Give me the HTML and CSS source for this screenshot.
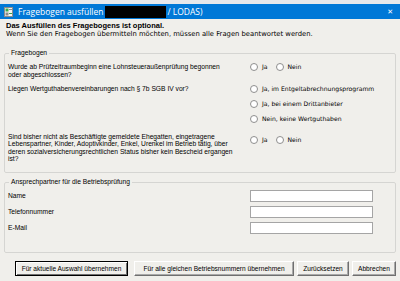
FILE: index.html
```html
<!DOCTYPE html>
<html lang="de">
<head>
    <meta charset="UTF-8">
    <title>Fragebogen ausfüllen</title>
    <link rel="stylesheet" href="styles.css">
</head>
<body>
    <div class="window">
        <div class="top-strip"></div>
        <div class="titlebar">
            <svg class="app-icon" width="9" height="10" viewBox="0 0 9 10">
                <rect x="0.5" y="0.5" width="8" height="9" fill="#f4f4f4" stroke="#8c8c8c"/>
                <rect x="1.5" y="1.5" width="3" height="3" fill="#3aa94a"/>
                <rect x="1.5" y="5.5" width="3" height="3" fill="#8c8c8c"/>
                <rect x="5" y="2" width="3" height="1" fill="#8c8c8c"/>
                <rect x="5" y="6" width="3" height="1" fill="#3aa94a"/>
            </svg>
            <span class="title-text">Fragebogen ausfüllen</span>
            <span class="redacted"></span>
            <span class="title-text">/ LODAS)</span>
            <span class="close">&#x2715;</span>
        </div>

        <div class="content">
            <div class="intro">
                <div class="intro-bold">Das Ausfüllen des Fragebogens ist optional.</div>
                <div>Wenn Sie den Fragebogen übermitteln möchten, müssen alle Fragen beantwortet werden.</div>
            </div>

            <fieldset class="group questions">
                <legend>Fragebogen</legend>
                <div class="row">
                    <div class="question">Wurde ab Prüfzeitraumbeginn eine Lohnsteueraußenprüfung begonnen<br>oder abgeschlossen?</div>
                    <div class="answers inline">
                        <label class="radio"><span class="dot"></span>Ja</label>
                        <label class="radio"><span class="dot"></span>Nein</label>
                    </div>
                </div>
                <div class="row row-2">
                    <div class="question">Liegen Wertguthabenvereinbarungen nach § 7b SGB IV vor?</div>
                    <div class="answers stacked">
                        <label class="radio"><span class="dot"></span>Ja, im Entgeltabrechnungsprogramm</label>
                        <label class="radio"><span class="dot"></span>Ja, bei einem Drittanbieter</label>
                        <label class="radio"><span class="dot"></span>Nein, keine Wertguthaben</label>
                    </div>
                </div>
                <div class="row row-3">
                    <div class="question long">Sind bisher nicht als Beschäftigte gemeldete Ehegatten, eingetragene<br>Lebenspartner, Kinder, Adoptivkinder, Enkel, Urenkel im Betrieb tätig, über<br>deren sozialversicherungsrechtlichen Status bisher kein Bescheid ergangen<br>ist?</div>
                    <div class="answers inline offset">
                        <label class="radio"><span class="dot"></span>Ja</label>
                        <label class="radio"><span class="dot"></span>Nein</label>
                    </div>
                </div>
            </fieldset>

            <fieldset class="group contact">
                <legend>Ansprechpartner für die Betriebsprüfung</legend>
                <div class="field"><span class="field-label">Name</span><input type="text"></div>
                <div class="field"><span class="field-label">Telefonnummer</span><input type="text"></div>
                <div class="field"><span class="field-label">E-Mail</span><input type="text"></div>
            </fieldset>

            <div class="buttons">
                <button class="btn btn-default" style="width: 113px">Für aktuelle Auswahl übernehmen</button>
                <button class="btn" style="width: 160px">Für alle gleichen Betriebsnummern übernehmen</button>
                <button class="btn" style="width: 52px">Zurücksetzen</button>
                <button class="btn" style="width: 44px">Abbrechen</button>
            </div>
        </div>
    </div>
</body>
</html>
```

FILE: styles.css
```css
body {
    margin: 0;
    padding: 0;
    font-family: "Liberation Sans", Arial, sans-serif;
    font-size: 6.7px;
    color: #000;
    background-color: #f0efeb;
    overflow: hidden;
}
.window {
    width: 400px;
    height: 281px;
    overflow: hidden;
}
.top-strip {
    height: 4px;
    background-color: #e6e8eb;
}
.titlebar {
    height: 15px;
    background-color: #0078d7;
    color: #fff;
    display: flex;
    align-items: center;
    padding-left: 4px;
    font-family: "Open Sans", "Noto Sans", sans-serif;
    font-size: 8.5px;
}
.app-icon {
    margin-right: 5px;
}
.redacted {
    width: 61px;
    height: 12px;
    background-color: #000;
    margin: 0 1px 0 2px;
}
.close {
    margin-left: auto;
    margin-right: 7px;
    font-size: 7px;
    font-family: "DejaVu Sans", sans-serif;
}

.content {
    padding: 3px 4px 0 4px;
}
.intro {
    padding-left: 2px;
    line-height: 8px;
    font-family: "DejaVu Sans", sans-serif;
    font-size: 6.8px;
}
.intro-bold {
    font-family: "Liberation Sans", Arial, sans-serif;
    font-size: 7.5px;
    font-weight: bold;
}

.group {
    margin: 11px 0 0 0;
    padding: 0 3px;
    border: 1px solid #d5d5d2;
    border-radius: 2px;
    line-height: 8px;
}
.group legend {
    padding: 0 2px;
    margin-left: 1px;
    line-height: 8px;
}

.questions {
    padding-top: 6px;
    padding-bottom: 10px;
}
.row {
    display: flex;
}
.row-2 {
    margin-top: 6px;
}
.row-3 {
    margin-top: 10px;
}
.question {
    width: 242px;
    flex-shrink: 0;
}
.question.long {
    line-height: 7.3px;
}
.answers.inline {
    display: flex;
    gap: 8px;
}
.answers.stacked {
    display: flex;
    flex-direction: column;
    gap: 7px;
}
.answers.offset {
    margin-top: 3px;
}
.radio {
    display: flex;
    align-items: center;
    height: 8px;
    white-space: nowrap;
    font-family: "DejaVu Sans", sans-serif;
    font-size: 6.1px;
}
.dot {
    width: 6px;
    height: 6px;
    border: 1px solid #8e8e8e;
    border-radius: 50%;
    background-color: #fff;
    margin-right: 4px;
}

.contact {
    margin-top: 5px;
    padding-top: 4px;
    padding-bottom: 18px;
}
.field {
    display: flex;
    align-items: center;
    height: 12px;
    margin-bottom: 4px;
}
.field:last-child {
    margin-bottom: 0;
}
.field-label {
    width: 242px;
}
.field input {
    width: 123px;
    height: 12px;
    box-sizing: border-box;
    margin: 0;
    padding: 0;
    border: 1px solid #a5a5a5;
    background-color: #fff;
}

.buttons {
    display: flex;
    gap: 3px;
    margin-top: 8px;
    padding-left: 11px;
}
.btn {
    height: 15px;
    box-sizing: border-box;
    padding: 0;
    font-family: "Liberation Sans", Arial, sans-serif;
    font-size: 6.6px;
    color: #000;
    background-color: #f0efeb;
    border: 1px solid;
    border-color: #fff #6f6f6f #6f6f6f #fff;
    box-shadow: inset -1px -1px 0 #a9a9a9;
}
.btn-default {
    margin-right: 3px;
    border-color: #000;
    box-shadow: inset 1px 1px 0 #fff, inset -1px -1px 0 #6f6f6f;
}
```
